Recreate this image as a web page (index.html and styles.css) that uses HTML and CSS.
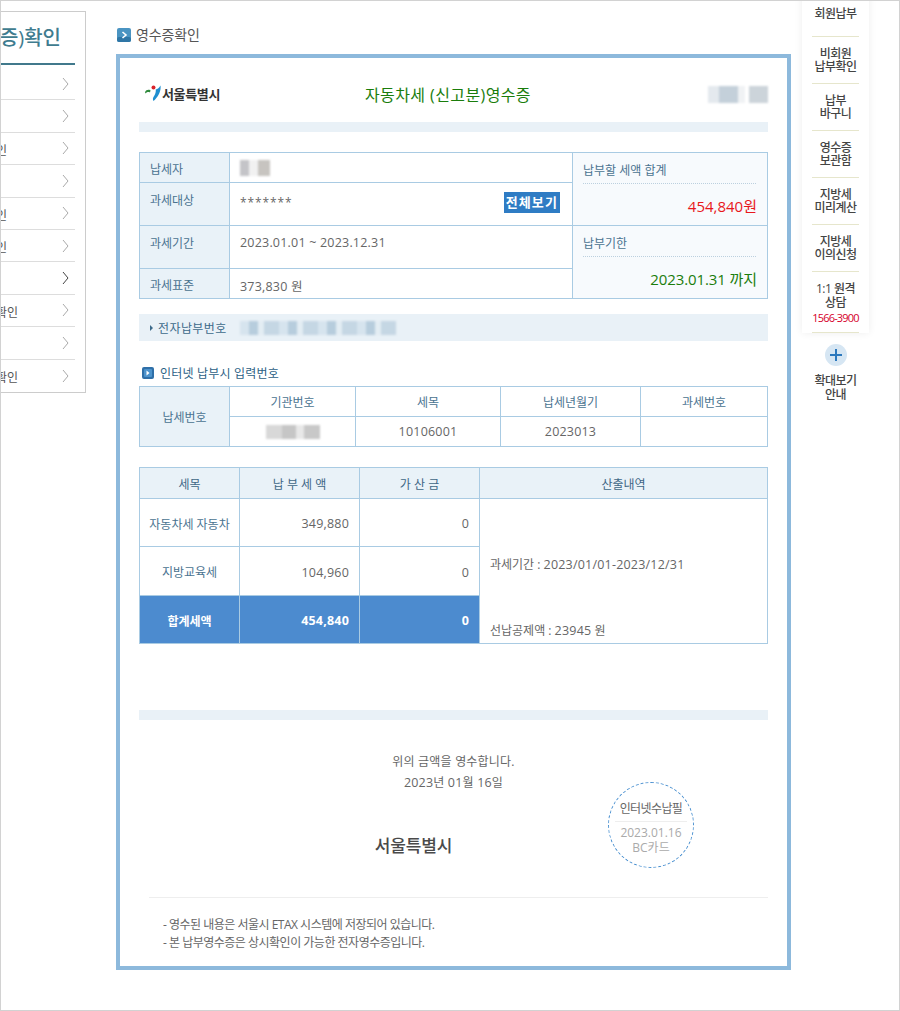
FILE: index.html
```html
<!DOCTYPE html>
<html lang="ko">
<head>
<meta charset="utf-8">
<title>영수증확인</title>
<link rel="stylesheet" href="styles.css">
</head>
<body>
<div class="page">
  <aside class="side">
    <h2 class="side-title"><span class="side-title-text">영수증)확인</span></h2>
    <ul class="side-list">
      <li class="side-row"><svg class="chev" viewBox="0 0 7 14"><path d="M1 1l5 6-5 6"/></svg></li>
      <li class="side-row"><svg class="chev" viewBox="0 0 7 14"><path d="M1 1l5 6-5 6"/></svg></li>
      <li class="side-row"><span class="side-one">인</span><svg class="chev" viewBox="0 0 7 14"><path d="M1 1l5 6-5 6"/></svg></li>
      <li class="side-row"><svg class="chev" viewBox="0 0 7 14"><path d="M1 1l5 6-5 6"/></svg></li>
      <li class="side-row"><span class="side-one">인</span><svg class="chev" viewBox="0 0 7 14"><path d="M1 1l5 6-5 6"/></svg></li>
      <li class="side-row"><span class="side-one">인</span><svg class="chev" viewBox="0 0 7 14"><path d="M1 1l5 6-5 6"/></svg></li>
      <li class="side-row"><svg class="chev chev-on" viewBox="0 0 7 14"><path d="M1 1l5 6-5 6"/></svg></li>
      <li class="side-row"><span class="side-two">확인</span><svg class="chev" viewBox="0 0 7 14"><path d="M1 1l5 6-5 6"/></svg></li>
      <li class="side-row"><svg class="chev" viewBox="0 0 7 14"><path d="M1 1l5 6-5 6"/></svg></li>
      <li class="side-row"><span class="side-two">확인</span><svg class="chev" viewBox="0 0 7 14"><path d="M1 1l5 6-5 6"/></svg></li>
    </ul>
  </aside>

  <main class="main">
    <h1 class="page-title">
      <svg class="ico-title" viewBox="0 0 14 14"><rect width="14" height="14" rx="2" fill="#4a94c2"/><rect y="9" width="14" height="5" rx="2" fill="#2f76a6"/><path d="M5.500 4l3.500 3-3.500 3" fill="none" stroke="#fff" stroke-width="1.600"/></svg>
      <span>영수증확인</span>
    </h1>
    <section class="card">
      <header class="doc-head">
        <div class="logo">
          <svg class="logo-mark" viewBox="0 0 16 17"><path d="M0 7.200C1.200 5 3 4.200 5.500 5.300L5 7.500C3.500 6.800 2 7 .6 8.600z" fill="#2f8a3c"/><circle cx="8.500" cy="2.500" r="2" fill="#d8232a"/><path d="M15.500.5c.8 5.500-2.500 11.500-7 15.500-.8-1.300-.8-2.500 0-4 1.500-2.500 2.700-4.800 2.200-7.500 2-.4 3.600-1.900 4.800-4z" fill="#1f8fd0"/></svg>
          <span class="logo-text">서울특별시</span>
        </div>
        <h2 class="doc-title">자동차세 (신고분)영수증</h2>
        <div class="mask mask-doc"></div>
      </header>
      <div class="band"></div>

      <table class="grid grid-info">
        <colgroup><col class="c-90"><col class="c-343"><col></colgroup>
        <tr class="h-30">
          <th class="low">납세자</th>
          <td><div class="mask mask-name"></div></td>
          <td class="sum" rowspan="2">
            <div class="sum-label">납부할 세액 합계</div>
            <div class="sum-value sum-red">454,840원</div>
          </td>
        </tr>
        <tr class="h-43">
          <th class="top">과세대상</th>
          <td class="top"><div class="target"><span class="stars">*******</span><span class="view-all">전체보기</span></div></td>
        </tr>
        <tr class="h-43">
          <th class="top">과세기간</th>
          <td class="top dg">2023.01.01 ~ 2023.12.31</td>
          <td class="sum" rowspan="2">
            <div class="sum-label">납부기한</div>
            <div class="sum-value sum-green">2023.01.31 까지</div>
          </td>
        </tr>
        <tr class="h-30">
          <th class="low">과세표준</th>
          <td class="low dg">373,830 원</td>
        </tr>
      </table>

      <div class="band band-pay">
        <span class="pay-label">전자납부번호</span>
        <div class="mask mask-pay"></div>
      </div>

      <h3 class="sub-title">
        <svg class="ico-sub" viewBox="0 0 12 12"><rect width="12" height="12" rx="2" fill="#2f6fa8"/><rect x="2" y="2" width="8" height="8" rx="1" fill="#4d93cc"/><path d="M4.500 3.500l3 2.500-3 2.500z" fill="#fff"/></svg>
        <span>인터넷 납부시 입력번호</span>
      </h3>
      <table class="grid grid-code">
        <colgroup><col class="c-90"><col class="c-126"><col class="c-145"><col class="c-140"><col></colgroup>
        <tr class="h-30">
          <th rowspan="2">납세번호</th>
          <td class="blue-text">기관번호</td><td class="blue-text">세목</td><td class="blue-text">납세년월기</td><td class="blue-text">과세번호</td>
        </tr>
        <tr class="h-30">
          <td><div class="mask mask-org"></div></td><td class="dg">10106001</td><td class="dg">2023013</td><td></td>
        </tr>
      </table>

      <table class="grid grid-tax">
        <colgroup><col class="c-100"><col class="c-120"><col class="c-120"><col></colgroup>
        <tr class="h-31">
          <th>세목</th><th>납 부 세 액</th><th>가 산 금</th><th>산출내역</th>
        </tr>
        <tr class="h-48">
          <td class="blue-text name-cell">자동차세 자동차</td><td class="num dg">349,880</td><td class="num dg">0</td>
          <td class="calc" rowspan="3">
            <div>과세기간 : <span class="dg">2023/01/01-2023/12/31</span></div>
            <div class="calc-last">선납공제액 : <span class="dg">23945</span> 원</div>
          </td>
        </tr>
        <tr class="h-49">
          <td class="blue-text name-cell">지방교육세</td><td class="num dg">104,960</td><td class="num dg">0</td>
        </tr>
        <tr class="h-48 total">
          <td class="name-cell">합계세액</td><td class="num dg">454,840</td><td class="num dg">0</td>
        </tr>
      </table>

      <div class="band band-end"></div>
      <div class="receipt">
        <p class="receipt-line">위의 금액을 영수합니다.</p>
        <p class="receipt-line"><span class="dg">2023</span>년 <span class="dg">01</span>월 <span class="dg">16</span>일</p>
        <p class="receipt-org">서울특별시</p>
        <div class="stamp">
          <span class="stamp-top">인터넷수납필</span>
          <span class="stamp-sub">2023.01.16</span>
          <span class="stamp-sub">BC카드</span>
        </div>
      </div>
      <div class="notes">
        <p>- 영수된 내용은 서울시 ETAX 시스템에 저장되어 있습니다.</p>
        <p>- 본 납부영수증은 상시확인이 가능한 전자영수증입니다.</p>
      </div>
    </section>
  </main>

  <nav class="rail">
    <ul class="rail-list">
      <li class="rail-item rail-first">회원납부</li>
      <li class="rail-item">비회원<br>납부확인</li>
      <li class="rail-item">납부<br>바구니</li>
      <li class="rail-item">영수증<br>보관함</li>
      <li class="rail-item">지방세<br>미리계산</li>
      <li class="rail-item">지방세<br>이의신청</li>
      <li class="rail-item rail-call">1:1 원격<br>상담<span class="rail-tel">1566-3900</span></li>
    </ul>
    <div class="zoom-guide">
      <svg class="zoom-ico" viewBox="0 0 22 22"><circle cx="11" cy="11" r="11" fill="#d6e6f3"/><path d="M11 5v12M5 11h12" stroke="#2b78bd" stroke-width="2"/></svg>
      <span>확대보기<br>안내</span>
    </div>
  </nav>
</div>
</body>
</html>
```
FILE: styles.css
```css
* { box-sizing: border-box; }
html, body { margin: 0; padding: 0; background: #fff; }
body { font-family: "Open Sans", "Noto Sans CJK KR", sans-serif; font-size: 12px; color: #666; }
h1, h2, h3, p, ul { margin: 0; padding: 0; font-weight: 400; }
ul { list-style: none; }

.page { display: flex; width: 900px; height: 1011px; border: 1px solid #d2d2d2; overflow: hidden; }
.dg { font-size: 12.5px; letter-spacing: .2px; }

/* left menu */
.side { flex: none; width: 85px; height: 382px; margin-top: 10px; border: 1px solid #ccc; border-left: 0; overflow: hidden; }
.side-title { height: 53px; width: 74px; padding-right: 14px; border-bottom: 2px solid #41798c; overflow: hidden; display: flex; justify-content: flex-end; white-space: nowrap; font-size: 20px; line-height: 52px; color: #3f7c8f; font-weight: 500; }
.side-title-text { flex: none; }
.side-list { width: 74px; margin-top: 3px; }
.side-row { height: 32.4px; display: flex; align-items: center; justify-content: flex-end; border-bottom: 1px solid #ddd; padding-right: 5px; color: #555; }
.side-row:last-child { border-bottom: 0; }
.side-one, .side-two { margin-right: auto; padding-top: 3px; margin-left: -5px; white-space: nowrap; font-size: 12px; }
.chev { width: 7px; height: 14px; fill: none; stroke: #aaa; stroke-width: 1; margin-right: 1px; }
.chev-on { stroke: #444; }

/* main */
.main { flex: none; width: 675px; margin-left: 30px; padding-top: 26px; }
.page-title { display: flex; align-items: center; gap: 5px; height: 16px; margin-bottom: 11px; font-size: 14px; color: #555; letter-spacing: -.1px; line-height: 16px; }
.ico-title { width: 14px; height: 14px; flex: none; margin-left: 1px; }
.card { width: 675px; border: 4px solid #8db9dc; padding: 20px 19px 14px 19px; }

.doc-head { display: flex; align-items: center; height: 32px; margin-bottom: 12px; }
.logo { display: flex; align-items: center; gap: 1px; width: 220px; margin-left: 6px; flex: none; margin-top: -2px; }
.logo-mark { width: 16px; height: 17px; flex: none; }
.logo-text { font-size: 13px; font-weight: 700; letter-spacing: -.35px; color: #333; }
.doc-title { font-size: 16px; letter-spacing: .4px; color: #1a7d0c; white-space: nowrap; width: 166px; flex: none; }
.mask { filter: blur(1px); }
.mask-doc { width: 60px; height: 17px; margin-left: auto; background: linear-gradient(90deg, #e4e9ee 0 18%, #c4d0da 18% 50%, #f0f2f4 50% 62%, #fff 62% 68%, #ccd4da 68% 100%); }

.band { height: 10px; background: #e9f1f7; }

.grid { width: 100%; border-collapse: collapse; table-layout: fixed; }
.grid th, .grid td { border: 1px solid #a9cbe3; padding: 0 10px; font-size: 12px; font-weight: 400; color: #666; }
.grid th { background: #e9f2f8; color: #4a7390; }
.grid td.dg { font-size: 12.5px; }
.c-90 { width: 90px; }
.c-343 { width: 343px; }
.c-126 { width: 126px; }
.c-145 { width: 145px; }
.c-140 { width: 140px; }
.c-100 { width: 100px; }
.c-120 { width: 120px; }
.h-30 { height: 30px; }
.h-31 { height: 31px; }
.h-43 { height: 43px; }
.h-48 { height: 48px; }
.h-49 { height: 49px; }

.grid-info { margin-top: 20px; }
.grid-info th { text-align: left; }
.grid-info .top { vertical-align: top; padding-top: 8px; }
.grid-info .low { padding-top: 3px; }
.target { display: flex; justify-content: space-between; align-items: flex-start; padding-right: 2px; }
.stars { letter-spacing: .9px; font-size: 12px; line-height: 20px; margin-top: 2px; }
.view-all { margin-top: 1px; padding: 0 2px; height: 21px; background: #2f7cc4; color: #fff; font-size: 13px; font-weight: 700; line-height: 20px; letter-spacing: 1.1px; }
.mask-name { width: 30px; height: 16px; background: linear-gradient(90deg, #c4c4c8 0 30%, #f1f1f1 30% 60%, #c7c4c0 60% 100%); }
.grid-info .sum { background: #f7fafd; vertical-align: top; padding-top: 9px; }
.sum-label { padding-bottom: 3px; border-bottom: 1px dotted #bcd0df; color: #4a7390; line-height: 18px; margin-right: 1px; }
.sum-value { text-align: right; font-size: 15px; line-height: 20px; margin-top: 12px; }
.sum-red { color: #e8171c; }
.sum-green { color: #1a7d0c; letter-spacing: -.1px; }

.band-pay { height: 27px; margin-top: 15px; display: flex; align-items: center; padding-left: 11px; }
.pay-label { width: 90px; color: #3d6a8a; font-size: 12px; letter-spacing: .4px; display: flex; align-items: center; gap: 5px; white-space: nowrap; }
.pay-label::before { content: ""; width: 0; height: 0; border-left: 3px solid #3d6a8a; border-top: 3px solid transparent; border-bottom: 3px solid transparent; }
.mask-pay { width: 156px; height: 14px; background: repeating-linear-gradient(90deg, #d6e4ee 0 9px, #b7cddd 9px 18px, #e3edf3 18px 24px, #c5d7e4 24px 39px); }

.sub-title { display: flex; align-items: center; gap: 6px; height: 16px; margin: 23px 0 6px 3px; font-size: 12px; color: #2d5f85; letter-spacing: .2px; padding-top: 1px; }
.ico-sub { width: 12px; height: 12px; flex: none; }

.grid-code td { text-align: center; }
.grid .blue-text { color: #4a7390; }
.mask-org { width: 54px; height: 14px; margin: 0 auto; background: linear-gradient(90deg, #d8d8d8 0 30%, #c6c6c6 30% 55%, #e8e8e8 55% 70%, #c8c8c8 70% 100%); }

.grid-tax { margin-top: 20px; }
.grid-tax th { color: #3f6786; text-align: center; padding-top: 1px; }
.grid-tax td { text-align: center; padding-top: 2px; }
.grid-tax td.name-cell { padding-left: 4px; padding-right: 4px; white-space: nowrap; }
.grid-tax td.num { text-align: right; }
.grid-tax td.calc { text-align: left; vertical-align: bottom; padding-bottom: 4px; }
.calc-last { margin-top: 48px; }
.grid .total td { background: #4c8bcf; color: #fff; font-weight: 700; }

.band-end { margin-top: 66px; }
.receipt { position: relative; text-align: center; padding-top: 31px; }
.receipt-line { line-height: 21px; letter-spacing: .2px; }
.receipt-org { margin-top: 43px; line-height: 20px; font-size: 17px; font-weight: 500; color: #4a4a4a; padding-right: 80px; letter-spacing: -.1px; }
.stamp { position: absolute; left: 469px; top: 62px; width: 86px; height: 86px; border: 1px dashed #4a90d0; border-radius: 50%; display: flex; flex-direction: column; align-items: center; padding-top: 16px; }
.stamp-top { width: 72px; text-align: center; font-size: 12px; line-height: 20px; padding-bottom: 2px; border-bottom: 1px solid #eee; margin-bottom: 3px; color: #666; letter-spacing: -.6px; }
.stamp-sub { font-size: 12px; line-height: 15px; color: #aaa; }

.notes { margin: 41px 0 0 10px; padding: 18px 0 0 14px; border-top: 1px solid #eee; }
.notes p { line-height: 18px; font-size: 12px; color: #666; letter-spacing: -.5px; }

/* right rail */
.rail { flex: none; width: 67px; margin-left: 11px; margin-top: -10px; text-align: center; }
.rail-list { box-shadow: 0 0 8px rgba(0,0,0,.07); padding: 0 10px; }
.rail-item { height: 47px; display: flex; flex-direction: column; align-items: center; justify-content: center; border-bottom: 1px solid #e6e6cc; font-size: 12px; line-height: 13px; color: #444; letter-spacing: -.5px; font-weight: 500; white-space: nowrap; }
.rail-first { height: 46px; display: block; padding-top: 16px; }
.rail-call { height: 61px; display: block; padding-top: 10px; line-height: 14px; }
.rail-tel { display: block; color: #d6002a; font-size: 11px; letter-spacing: -.8px; line-height: 16px; }
.zoom-guide { display: flex; flex-direction: column; align-items: center; margin-top: 11px; font-size: 12px; line-height: 14px; color: #444; letter-spacing: -.5px; font-weight: 500; }
.zoom-ico { width: 22px; height: 22px; margin-bottom: 8px; }
```
